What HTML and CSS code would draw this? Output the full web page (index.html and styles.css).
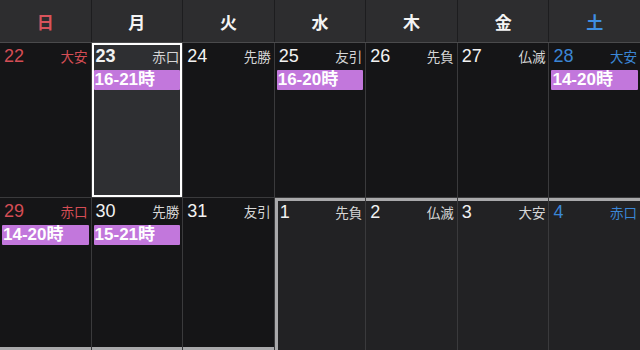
FILE: index.html
```html
<!DOCTYPE html>
<html lang="ja">
<head>
<meta charset="utf-8">
<link rel="stylesheet" href="styles.css">
</head>
<body>
<div class="cal">
  <div class="head">
    <div class="hd sun">日</div>
    <div class="hd">月</div>
    <div class="hd">火</div>
    <div class="hd">水</div>
    <div class="hd">木</div>
    <div class="hd">金</div>
    <div class="hd sat">土</div>
  </div>
  <div class="body">
    <div class="cell sun"><div class="top"><span class="num">22</span><span class="rk">大安</span></div></div>
    <div class="cell today"><div class="top"><span class="num">23</span><span class="rk">赤口</span></div><div class="ev">16-21時</div></div>
    <div class="cell"><div class="top"><span class="num">24</span><span class="rk">先勝</span></div></div>
    <div class="cell"><div class="top"><span class="num">25</span><span class="rk">友引</span></div><div class="ev">16-20時</div></div>
    <div class="cell"><div class="top"><span class="num">26</span><span class="rk">先負</span></div></div>
    <div class="cell"><div class="top"><span class="num">27</span><span class="rk">仏滅</span></div></div>
    <div class="cell sat"><div class="top"><span class="num">28</span><span class="rk">大安</span></div><div class="ev">14-20時</div></div>

    <div class="cell sun last"><div class="top"><span class="num">29</span><span class="rk">赤口</span></div><div class="ev">14-20時</div></div>
    <div class="cell last"><div class="top"><span class="num">30</span><span class="rk">先勝</span></div><div class="ev">15-21時</div></div>
    <div class="cell last"><div class="top"><span class="num">31</span><span class="rk">友引</span></div></div>
    <div class="cell next first"><div class="top"><span class="num">1</span><span class="rk">先負</span></div></div>
    <div class="cell next"><div class="top"><span class="num">2</span><span class="rk">仏滅</span></div></div>
    <div class="cell next"><div class="top"><span class="num">3</span><span class="rk">大安</span></div></div>
    <div class="cell next sat"><div class="top"><span class="num">4</span><span class="rk">赤口</span></div></div>
  </div>
</div>
</body>
</html>
```

FILE: styles.css
```css
html, body {
  margin: 0;
  padding: 0;
  background: #151517;
  overflow: hidden;
}
body {
  width: 640px;
  height: 350px;
  font-family: "Liberation Sans", "Noto Sans CJK JP", sans-serif;
  color: #f2f2f2;
}
.cal {
  width: 640px;
  height: 350px;
  display: flex;
  flex-direction: column;
}
.head {
  display: grid;
  grid-template-columns: repeat(7, 1fr);
  column-gap: 1px;
  background: #1d1d1f;
  height: 42px;
  border-bottom: 1px solid #4a4a4c;
  flex: none;
}
.hd {
  background: #2d2d2f;
  display: flex;
  align-items: center;
  justify-content: center;
  font-family: "Noto Sans CJK JP", sans-serif;
  font-weight: 700;
  font-size: 17px;
  color: #f4f4f4;
}
.hd.sun { color: #d9545c; }
.hd.sat { color: #3f8fe2; }
.body {
  display: grid;
  grid-template-columns: repeat(7, 1fr);
  grid-template-rows: 154px 160px;
  gap: 1px;
  background: #3a3a3c;
  flex: none;
}
.cell {
  background: #151517;
  box-sizing: border-box;
  padding: 2px 2px 0 2px;
  display: flex;
  flex-direction: column;
  gap: 3px;
}
.top {
  display: flex;
  justify-content: space-between;
  align-items: baseline;
  height: 22px;
  padding: 0 1px 0 2px;
}
.num {
  font-size: 18px;
  line-height: 22px;
  color: #f2f2f2;
}
.rk {
  font-family: "Noto Sans CJK JP", sans-serif;
  font-size: 13.5px;
  color: #d6d6d6;
}
.sun .num, .sun .rk { color: #d44d55; }
.sat .num, .sat .rk { color: #3b86d6; }
.today {
  background: #2e2f32;
  border: 2px solid #ffffff;
  padding: 0;
}
.today .top { padding-left: 2px; padding-right: 1px; }
.today .num { font-weight: 700; }
.ev {
  background: #c277dc;
  color: #ffffff;
  height: 20px;
  line-height: 20px;
  font-size: 17px;
  font-weight: 700;
  padding-left: 1px;
  border-radius: 1px;
  font-family: "Liberation Sans", "Noto Sans CJK JP", sans-serif;
}
.last {
  border-bottom: 3px solid #a9a9ab;
  height: 152px;
}
.next {
  background: #222224;
  border-top: 3px solid #a9a9ab;
  padding-top: 0;
}
.next.first {
  border-left: 3px solid #a9a9ab;
  padding-left: 0;
}
```
